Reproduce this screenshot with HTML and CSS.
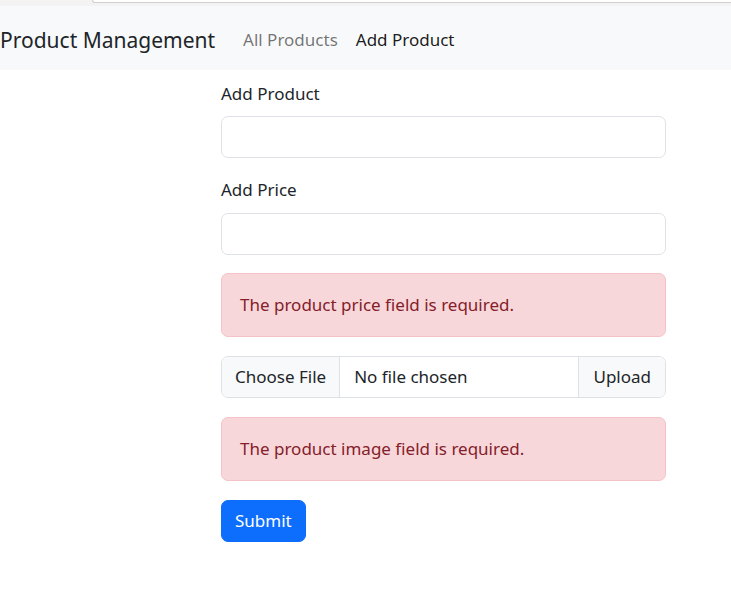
FILE: index.html
```html
<!DOCTYPE html>
<html lang="en">
<head>
<meta charset="utf-8">
<title>Product Management</title>
<link rel="stylesheet" href="styles.css">
</head>
<body>
<div class="chrome"><div class="chrome-edge"></div></div>
<nav class="navbar">
  <span class="brand">Product Management</span>
  <a class="nav-link">All Products</a>
  <a class="nav-link active">Add Product</a>
</nav>
<main class="content">
  <form class="form">
    <div class="field">
      <label class="label">Add Product</label>
      <input class="control" type="text">
    </div>
    <div class="field field-second">
      <label class="label">Add Price</label>
      <input class="control" type="text">
    </div>
    <div class="alert">The product price field is required.</div>
    <div class="input-group">
      <span class="file-btn">Choose File</span>
      <span class="file-name">No file chosen</span>
      <span class="group-text">Upload</span>
    </div>
    <div class="alert">The product image field is required.</div>
    <button class="btn" type="button">Submit</button>
  </form>
</main>
</body>
</html>
```
FILE: styles.css
```css
* { box-sizing: border-box; }
html, body { margin: 0; padding: 0; }
body {
  font-family: "Noto Sans", "Open Sans", sans-serif;
  font-size: 17px;
  line-height: 26px;
  color: #212529;
  background: #fff;
}
.chrome { height: 6px; background: #f3f3f3; }
.chrome-edge {
  margin-left: 92px;
  height: 3px;
  background: #fff;
  border-bottom: 1px solid #cfcfcf;
  border-left: 1px solid #cfcfcf;
  border-bottom-left-radius: 10px;
}
.navbar {
  display: flex;
  align-items: center;
  height: 64px;
  padding-top: 3px;
  background: #f8f9fa;
}
.brand { font-size: 21px; line-height: 30px; margin-right: 19px; }
.nav-link { color: rgba(0,0,0,.55); padding: 0 9px; }
.nav-link.active { color: rgba(0,0,0,.9); }
.content { padding-left: 221px; width: 666px; padding-top: 11px; }
.form { display: flex; flex-direction: column; gap: 19px; }
.field { display: flex; flex-direction: column; }
.label { margin-bottom: 9px; }
.field-second { margin-bottom: -1px; }
.field-second .label { margin-bottom: 10px; }
.control {
  height: 42px;
  border: 1px solid #dee2e6;
  border-radius: 7px;
  font: inherit;
}
.alert {
  background: #f8d7da;
  border: 1px solid #f5c2c7;
  color: #842029;
  border-radius: 7px;
  padding: 18px 18px;
  height: 64px;
}
.input-group {
  display: flex;
  height: 42px;
  border: 1px solid #dee2e6;
  border-radius: 7px;
  overflow: hidden;
}
.input-group > span { display: flex; align-items: center; }
.file-btn { background: #f8f9fa; padding: 0 13px; border-right: 1px solid #dee2e6; }
.file-name { flex: 1; padding: 0 14px; }
.group-text { background: #f8f9fa; padding: 0 14px; border-left: 1px solid #dee2e6; }
.btn {
  align-self: flex-start;
  height: 42px;
  padding: 0 13px;
  background: #0d6efd;
  color: #fff;
  border: 1px solid #0d6efd;
  border-radius: 7px;
  font: inherit;
}
```
